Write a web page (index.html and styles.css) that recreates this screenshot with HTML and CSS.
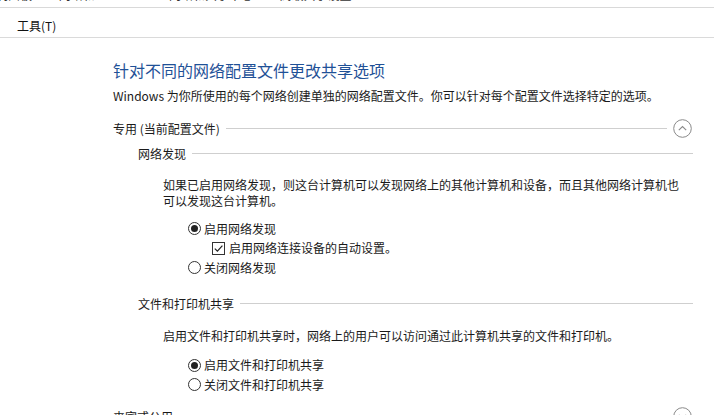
FILE: index.html
```
<!DOCTYPE html>
<html lang="zh-CN">
<head>
    <meta charset="UTF-8">
    <title>高级共享设置</title>
    <link rel="stylesheet" href="styles.css">
</head>
<body>
    <div class="crumbs">
        <div class="crumbs-inner">
            <span class="crumb first">控制面板</span><span class="sep">&gt;</span>
            <span class="crumb">网络和 Internet</span><span class="sep">&gt;</span>
            <span class="crumb">网络和共享中心</span><span class="sep">&gt;</span>
            <span class="crumb">高级共享设置</span>
        </div>
    </div>

    <div class="menubar">
        <span class="menu-item">工具(T)</span>
    </div>

    <div class="content">
        <h1 class="title">针对不同的网络配置文件更改共享选项</h1>
        <p class="desc">Windows 为你所使用的每个网络创建单独的网络配置文件。你可以针对每个配置文件选择特定的选项。</p>

        <!-- 专用 -->
        <div class="profile-head">
            <span class="profile-name">专用 (当前配置文件)</span>
            <span class="rule"></span>
            <span class="toggle">
                <svg width="19" height="19" viewBox="0 0 19 19">
                    <circle cx="9.5" cy="9.5" r="8.8" fill="none" stroke="#8a8a8a" stroke-width="1"/>
                    <path d="M5.8 11.2 L9.5 7.5 L13.2 11.2" fill="none" stroke="#8a8a8a" stroke-width="1.1"/>
                </svg>
            </span>
        </div>

        <div class="group">
            <div class="group-head">
                <span class="group-name">网络发现</span>
                <span class="rule"></span>
            </div>
            <p class="group-text">如果已启用网络发现，则这台计算机可以发现网络上的其他计算机和设备，而且其他网络计算机也可以发现这台计算机。</p>
            <div class="options">
                <div class="opt"><span class="radio on"></span>启用网络发现</div>
                <div class="opt sub"><span class="check"><svg width="11" height="11" viewBox="0 0 11 11"><path d="M1.8 5.6 L4.4 8.2 L9.4 2.6" fill="none" stroke="#222" stroke-width="1.2"/></svg></span>启用网络连接设备的自动设置。</div>
                <div class="opt"><span class="radio"></span>关闭网络发现</div>
            </div>
        </div>

        <div class="group second">
            <div class="group-head">
                <span class="group-name">文件和打印机共享</span>
                <span class="rule"></span>
            </div>
            <p class="group-text">启用文件和打印机共享时，网络上的用户可以访问通过此计算机共享的文件和打印机。</p>
            <div class="options short">
                <div class="opt"><span class="radio on"></span>启用文件和打印机共享</div>
                <div class="opt"><span class="radio"></span>关闭文件和打印机共享</div>
            </div>
        </div>

        <!-- 来宾或公用 -->
        <div class="profile-head guest">
            <span class="profile-name">来宾或公用</span>
            <span class="rule"></span>
            <span class="toggle">
                <svg width="19" height="19" viewBox="0 0 19 19">
                    <circle cx="9.5" cy="9.5" r="8.8" fill="none" stroke="#8a8a8a" stroke-width="1"/>
                    <path d="M5.8 7.8 L9.5 11.5 L13.2 7.8" fill="none" stroke="#8a8a8a" stroke-width="1.1"/>
                </svg>
            </span>
        </div>
    </div>
</body>
</html>
```

FILE: styles.css
```
body {
    margin: 0;
    background: #fff;
    color: #1a1a1a;
    font-family: "Noto Sans CJK SC", "Noto Sans", sans-serif;
    font-size: 12px;
    overflow: hidden;
}

.crumbs {
    height: 7px;
    overflow: hidden;
    border-bottom: 1px solid #d9d9d9;
}

.crumbs-inner {
    display: flex;
    gap: 10px;
    margin-top: -13px;
    margin-left: -16px;
    line-height: 16px;
    white-space: nowrap;
    color: #333;
}

.crumbs .sep {
    color: #888;
}

.menubar {
    height: 29px;
    border-bottom: 1px solid #dadada;
    padding-left: 17px;
}

.menu-item {
    display: inline-block;
    margin-top: 10px;
    line-height: 16px;
    color: #111;
}

.content {
    padding: 0 21px 0 113px;
}

.title {
    margin: 22px 0 0;
    font-size: 16px;
    font-weight: normal;
    line-height: 20px;
    color: #1f5197;
}

.desc {
    margin: 8px 0 0;
    line-height: 16px;
}

.profile-head {
    display: flex;
    align-items: center;
    height: 20px;
    margin-top: 14px;
}

.profile-head.guest {
    margin-top: 12px;
}

.rule {
    flex: 1;
    height: 1px;
    background: #cfcfcf;
    margin-left: 6px;
}

.toggle {
    display: flex;
    margin-left: 6px;
    margin-right: 1px;
}

.group {
    padding-left: 25px;
}

.group-head {
    display: flex;
    align-items: center;
    height: 16px;
    margin-top: 7px;
}

.group.second .group-head {
    margin-top: 18px;
}

.group-text {
    margin: 16px 0 0;
    padding-left: 25px;
    line-height: 16px;
    max-width: 520px;
}

.options {
    margin-top: 10px;
    padding-left: 50px;
}

.options.short {
    margin-top: 12px;
}

.opt {
    display: flex;
    align-items: center;
    height: 19.5px;
    line-height: 16px;
}

.opt.sub {
    padding-left: 24px;
}

.radio {
    width: 11px;
    height: 11px;
    border: 1px solid #333;
    border-radius: 50%;
    margin-right: 3px;
    display: flex;
    align-items: center;
    justify-content: center;
    flex: none;
}

.radio.on::after {
    content: "";
    width: 7px;
    height: 7px;
    border-radius: 50%;
    background: #222;
}

.check {
    width: 11px;
    height: 11px;
    border: 1px solid #333;
    margin-right: 4px;
    display: flex;
    flex: none;
}
```
